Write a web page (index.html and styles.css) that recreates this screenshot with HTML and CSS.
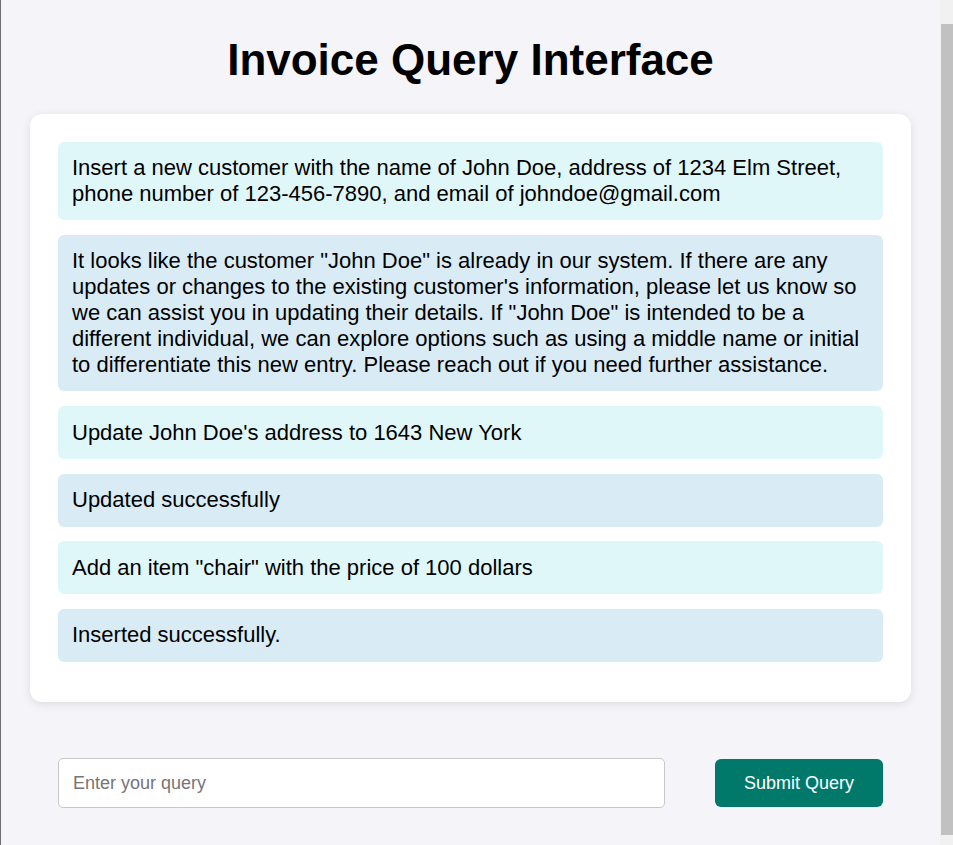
FILE: index.html
```html
<!DOCTYPE html>
<html lang="en">
<head>
<meta charset="utf-8">
<title>Invoice Query Interface</title>
<link rel="stylesheet" href="styles.css">
</head>
<body>
<div class="frame">
  <main class="page">
    <h1 class="title">Invoice Query Interface</h1>
    <section class="chat">
      <div class="msg msg-user">Insert a new customer with the name of John Doe, address of 1234 Elm Street, phone number of 123-456-7890, and email of johndoe@gmail.com</div>
      <div class="msg msg-bot">It looks like the customer "John Doe" is already in our system. If there are any updates or changes to the existing customer's information, please let us know so we can assist you in updating their details. If "John Doe" is intended to be a different individual, we can explore options such as using a middle name or initial to differentiate this new entry. Please reach out if you need further assistance.</div>
      <div class="msg msg-user msg-single">Update John Doe's address to 1643 New York</div>
      <div class="msg msg-bot msg-single">Updated successfully</div>
      <div class="msg msg-user msg-single">Add an item "chair" with the price of 100 dollars</div>
      <div class="msg msg-bot msg-single">Inserted successfully.</div>
    </section>
    <form class="composer" onsubmit="return false">
      <input class="query" type="text" placeholder="Enter your query">
      <button class="submit" type="submit">Submit Query</button>
    </form>
  </main>
  <div class="scrollbar"><div class="thumb"></div></div>
</div>
</body>
</html>
```
FILE: styles.css
```css
html, body {
  margin: 0;
  padding: 0;
  height: 100%;
}
body {
  font-family: "Liberation Sans", Arial, sans-serif;
  background: #f4f4f9;
  color: #000;
  overflow: hidden;
}
.frame {
  display: flex;
  height: 845px;
  border-left: 1px solid #6e6e6e;
}
.page {
  flex: 1;
  padding: 34px 29px 0;
  min-width: 0;
}
.title {
  margin: 0 0 29px;
  text-align: center;
  font-size: 44px;
  line-height: 51px;
  font-weight: bold;
}
.chat {
  background: #fff;
  border-radius: 12px;
  padding: 28px 28px 26px;
  box-shadow: 0 2px 10px rgba(0, 0, 0, 0.1);
}
.msg {
  font-size: 22px;
  line-height: 26px;
  padding: 13px 14px;
  border-radius: 6px;
  margin-bottom: 15px;
}
.msg-single {
  padding-top: 13.5px;
  padding-bottom: 13.5px;
  margin-bottom: 14.5px;
}
.msg-user {
  background: #e0f7fa;
}
.msg-bot {
  background: #d9ecf6;
}
.composer {
  display: flex;
  align-items: center;
  gap: 50px;
  margin: 0;
  padding: 56px 28px 0;
}
.query {
  flex: 1;
  height: 50px;
  box-sizing: border-box;
  border: 1px solid #c8c8c8;
  border-radius: 5px;
  padding: 0 14px;
  font-family: "Liberation Sans", Arial, sans-serif;
  font-size: 18px;
  background: #fff;
  outline: none;
}
.query::placeholder {
  color: #757575;
}
.submit {
  width: 168px;
  height: 48px;
  border: none;
  border-radius: 6px;
  background: #00796b;
  color: #fff;
  font-family: "Liberation Sans", Arial, sans-serif;
  font-size: 18px;
  cursor: pointer;
}
.scrollbar {
  width: 13px;
  flex: none;
  background: #f1f1f1;
  padding: 24px 0 10px 1px;
  box-sizing: border-box;
  display: flex;
}
.thumb {
  flex: 1;
  background: #c1c1c1;
}
```
